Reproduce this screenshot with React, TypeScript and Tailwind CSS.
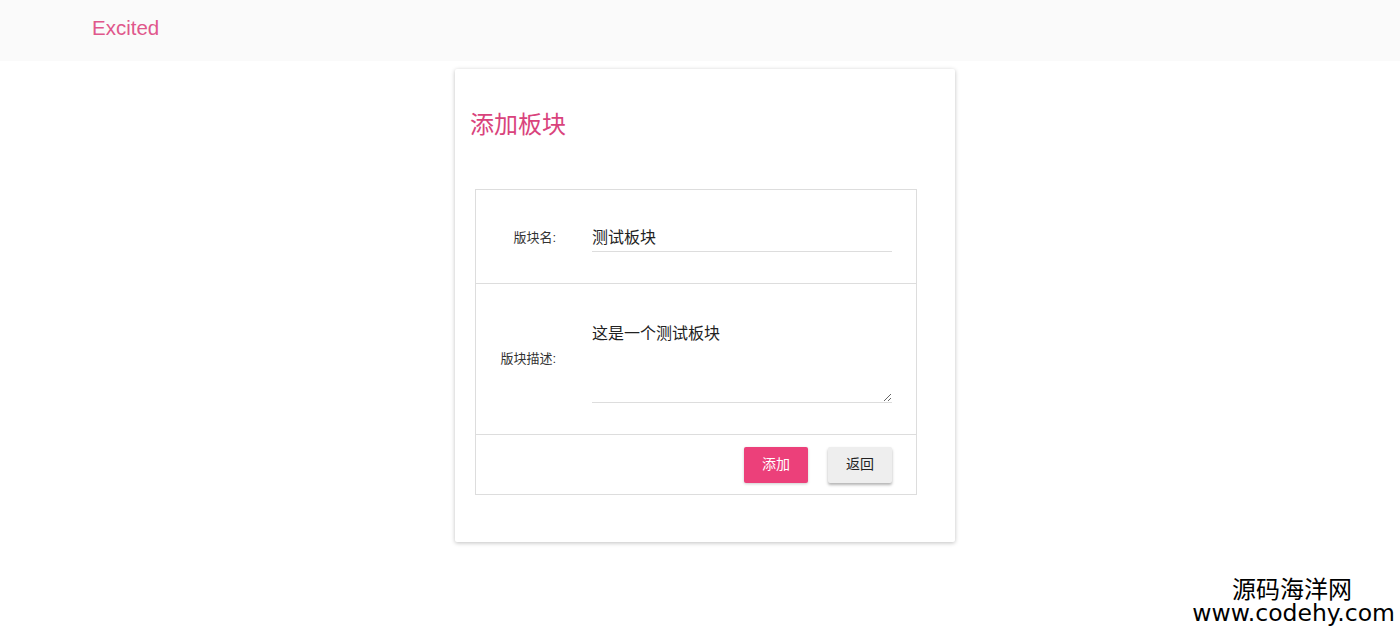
export default function App() {
  const font = { fontFamily: '"Liberation Sans", "Noto Sans CJK SC", sans-serif' };
  return (
    <div className="min-h-[633px] bg-white relative" style={font}>
      <header className="h-[61px] bg-[#fafafa] flex items-center pl-[92px] pb-[4px]">
        <span className="text-[20.5px] text-[#e0578b]">Excited</span>
      </header>
      <main className="pt-[8px]">
        <div className="ml-[455px] w-[500px] h-[473px] bg-white shadow-[0_1px_4px_rgba(0,0,0,0.25)] rounded-[2px] px-[20px] pt-[40px]">
          <h1 className="-ml-[5px] text-[24px] leading-[32px] text-[#d9437c]">添加板块</h1>
          <div className="mt-[48px] w-[442px] border border-[#dddddd]">
            <div className="h-[94px] flex items-center border-b border-[#dddddd]">
              <div className="w-[80px] text-right text-[13px] text-[#333] pt-[2px]">版块名:</div>
              <div className="ml-[36px] w-[300px] border-b border-[#dddddd] pt-[4px] pb-[1px]">
                <input
                  defaultValue="测试板块"
                  className="w-full outline-none text-[16px] text-[#222] bg-transparent"
                  style={font}
                />
              </div>
            </div>
            <div className="h-[151px] flex items-center border-b border-[#dddddd]">
              <div className="w-[80px] text-right text-[13px] text-[#333]">版块描述:</div>
              <div className="ml-[36px] w-[300px] border-b border-[#dddddd] mt-[6px]">
                <textarea
                  defaultValue="这是一个测试板块"
                  className="w-full h-[80px] block outline-none text-[16px] text-[#222] bg-transparent resize-y"
                  style={font}
                />
              </div>
            </div>
            <div className="h-[59px] flex items-center justify-end pr-[24px] gap-[20px]">
              <button className="w-[64px] h-[36px] rounded-[2px] bg-[#ec407a] text-white text-[14px] shadow-[0_1px_3px_rgba(0,0,0,0.2)]">添加</button>
              <button className="w-[64px] h-[36px] rounded-[2px] bg-[#eeeeee] text-[#222] text-[14px] shadow-[0_2px_3px_rgba(0,0,0,0.3)]">返回</button>
            </div>
          </div>
        </div>
      </main>
      <div className="absolute right-[5px] top-[576px] flex flex-col items-end text-black">
        <span className="text-[24px] leading-[24px] mr-[43px]" style={{ fontFamily: '"Noto Sans CJK SC", sans-serif' }}>源码海洋网</span>
        <span className="text-[23.5px] leading-[26px]" style={{ fontFamily: '"DejaVu Sans", sans-serif' }}>www.codehy.com</span>
      </div>
    </div>
  );
}
